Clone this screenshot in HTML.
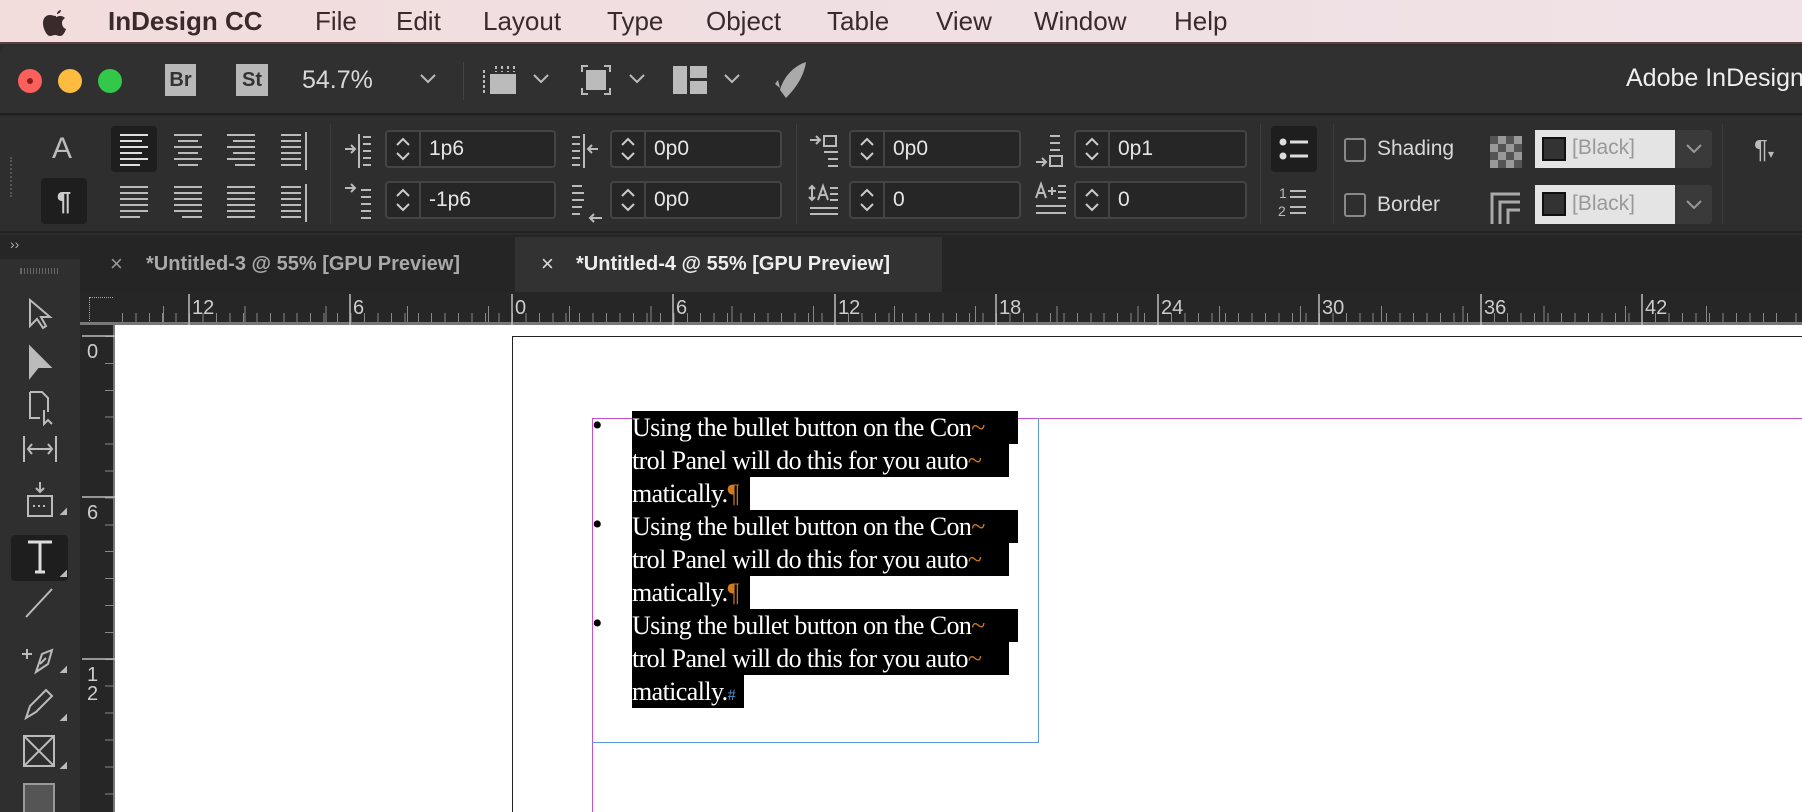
<!DOCTYPE html>
<html><head><meta charset="utf-8"><style>
*{margin:0;padding:0;box-sizing:border-box}
body{width:1802px;height:812px;overflow:hidden;background:#fff;font-family:"Liberation Sans",sans-serif;position:relative}
.a{position:absolute}
.menu{left:0;top:0;width:1802px;height:44px;background:linear-gradient(90deg,#f2dcdc,#efe0e4 60%,#f0e2e6);border-bottom:2px solid #5a3e40}
.menu span{position:absolute;top:6px;font-size:26px;color:#3a2a2c;white-space:nowrap}
.win{left:0;top:44px;width:1802px;height:768px;background:#2c2c2c}
.lt{color:#d8d8d8}
.inp{position:absolute;height:38px;border:2px solid #444;border-radius:4px;background:#262626;color:#e6e6e6;font-size:21px;line-height:34px}
.inp .sp{position:absolute;left:0;top:0;width:34px;height:34px;border-right:2px solid #444}
.inp .v{position:absolute;left:42px;top:0}
.hl{background:#000;color:#fff;display:inline-block;white-space:nowrap;height:33px;line-height:33px}
.txt{font-family:"Liberation Serif",serif;font-size:26px;letter-spacing:-0.6px}
.or{color:#d07a20}
.bul{position:absolute;left:0;top:-2px;font-size:30px;color:#000}
</style></head><body>
<div class="a menu">
<svg class="a" style="left:42px;top:8px" width="28" height="30" viewBox="0 0 28 30"><path d="M19 2c-2 0-4 2-4 4 2 0 4-2 4-4zM14 8c-2 0-4-1-6-1-4 0-7 3-7 8 0 6 4 13 7 13 2 0 3-1 5-1s3 1 5 1c3 0 5-4 6-7-3-1-4-4-4-6 0-3 2-4 3-5-2-2-4-2-5-2-2 0-3 1-4 1z" fill="#3a2a2c"/></svg>
<span style="left:108px;font-weight:bold">InDesign CC</span>
<span style="left:315px">File</span><span style="left:396px">Edit</span><span style="left:483px">Layout</span><span style="left:607px">Type</span><span style="left:706px">Object</span><span style="left:827px">Table</span><span style="left:936px">View</span><span style="left:1034px">Window</span><span style="left:1174px">Help</span>
</div>
<div class="a win"></div>
<div class="a" style="left:0;top:46px;width:1802px;height:69px;background:#303030;border-bottom:2px solid #1e1e1e;border-radius:8px 0 0 0"></div>
<div class="a" style="left:18px;top:69px;width:24px;height:24px;border-radius:50%;background:#fc605c"></div>
<div class="a" style="left:27px;top:78px;width:6px;height:6px;border-radius:50%;background:#8a1d1a"></div>
<div class="a" style="left:58px;top:69px;width:24px;height:24px;border-radius:50%;background:#fdbc40"></div>
<div class="a" style="left:98px;top:69px;width:24px;height:24px;border-radius:50%;background:#34c84a"></div>
<div class="a" style="left:165px;top:64px;width:31px;height:32px;background:#b8b8b8;color:#333;font-size:20px;font-weight:bold;text-align:center;line-height:32px">Br</div>
<div class="a" style="left:236px;top:64px;width:32px;height:32px;background:#b8b8b8;color:#333;font-size:20px;font-weight:bold;text-align:center;line-height:32px">St</div>
<div class="a lt" style="left:302px;top:66px;font-size:25px">54.7%</div>
<svg class="a" style="left:420px;top:74px" width="16" height="10"><path d="M1 1l7 7 7-7" stroke="#bbb" stroke-width="2" fill="none"/></svg>
<div class="a" style="left:463px;top:62px;width:1px;height:38px;background:#444"></div>
<svg class="a" style="left:482px;top:64px" width="38" height="32"><rect x="8" y="10" width="26" height="20" fill="#bbb"/><path d="M2 6v24M14 2v6M20 2v6M26 2v6M32 2v6" stroke="#bbb" stroke-width="2" stroke-dasharray="3 2"/></svg>
<svg class="a" style="left:533px;top:74px" width="16" height="10"><path d="M1 1l7 7 7-7" stroke="#bbb" stroke-width="2" fill="none"/></svg>
<svg class="a" style="left:580px;top:64px" width="32" height="32"><rect x="6" y="6" width="20" height="20" fill="#bbb"/><path d="M2 8V2h6M24 2h6v6M30 24v6h-6M8 30H2v-6" stroke="#bbb" stroke-width="2" fill="none"/></svg>
<svg class="a" style="left:629px;top:74px" width="16" height="10"><path d="M1 1l7 7 7-7" stroke="#bbb" stroke-width="2" fill="none"/></svg>
<svg class="a" style="left:673px;top:66px" width="34" height="28"><rect x="0" y="0" width="14" height="28" fill="#bbb"/><rect x="17" y="0" width="17" height="12" fill="#bbb"/><rect x="17" y="15" width="17" height="13" fill="#bbb"/></svg>
<svg class="a" style="left:724px;top:74px" width="16" height="10"><path d="M1 1l7 7 7-7" stroke="#bbb" stroke-width="2" fill="none"/></svg>
<svg class="a" style="left:774px;top:60px" width="36" height="40"><path d="M32 2C20 6 10 16 6 30l6 8C22 28 30 16 32 2zM4 20l-3 4 5 4z" fill="#aaa"/></svg>
<div class="a" style="left:1626px;top:64px;font-size:25px;color:#eee;white-space:nowrap">Adobe InDesign</div>
<div class="a" style="left:0;top:117px;width:1802px;height:116px;background:#2e2e2e;border-bottom:2px solid #222"></div>
<div class="a" style="left:10px;top:157px;width:3px;height:40px;border-left:2px dotted #555"></div>
<div class="a" style="left:52px;top:132px;font-size:30px;color:#bbb">A</div>
<div class="a" style="left:41px;top:178px;width:46px;height:46px;background:#1e1e1e;border-radius:4px;color:#ccc;font-size:26px;text-align:center;line-height:46px;font-weight:bold">¶</div>
<div class="a" style="left:111px;top:126px;width:46px;height:46px;background:#1e1e1e;border-radius:4px"></div>
<svg class="a" style="left:118px;top:132px" width="200" height="90" fill="none" stroke="#bbb" stroke-width="2">
<path d="M2 3h28M2 9h22M2 15h28M2 21h22M2 27h28M2 33h20" stroke="#ddd"/>
<path d="M56 3h28M60 9h20M56 15h28M60 21h20M56 27h28M60 33h20"/>
<path d="M109 3h28M115 9h22M109 15h28M115 21h22M109 27h28M117 33h20"/>
<path d="M163 3h20M163 9h20M163 15h20M163 21h20M163 27h20M163 33h20M188 0v38"/>
<path d="M2 55h28M2 61h28M2 67h28M2 73h28M2 79h28M2 85h20"/>
<path d="M56 55h28M56 61h28M56 67h28M56 73h28M56 79h28M64 85h20"/>
<path d="M109 55h28M109 61h28M109 67h28M109 73h28M109 79h28M109 85h28"/>
<path d="M163 55h20M163 61h20M163 67h20M163 73h20M163 79h20M163 85h20M188 52v38"/>
</svg>
<div class="a" style="left:330px;top:124px;width:1px;height:100px;background:#3e3e3e"></div>
<svg class="a" style="left:343px;top:134px" width="30" height="90" fill="none" stroke="#bbb" stroke-width="2"><path d="M2 15h10M8 11l4 4-4 4M16 0v34M20 3h8M20 10h8M20 17h8M20 24h8M20 31h8"/><path d="M2 54h10M8 50l4 4-4 4M18 56h10M18 63h10M18 70h10M18 77h10M18 84h10"/></svg>
<div class="inp" style="left:385px;top:130px;width:171px"><div class="sp"><svg width="32" height="34"><path d="M10 13l6-6 6 6M10 21l6 6 6-6" stroke="#ccc" stroke-width="2" fill="none"/></svg></div><span class="v">1p6</span></div>
<div class="inp" style="left:385px;top:181px;width:171px"><div class="sp"><svg width="32" height="34"><path d="M10 13l6-6 6 6M10 21l6 6 6-6" stroke="#ccc" stroke-width="2" fill="none"/></svg></div><span class="v">-1p6</span></div>
<svg class="a" style="left:570px;top:134px" width="34" height="90" fill="none" stroke="#bbb" stroke-width="2"><path d="M2 3h8M2 10h8M2 17h8M2 24h8M2 31h8M14 0v34M28 15h-10M22 11l-4 4 4 4"/><path d="M2 52h10M2 59h12M2 66h12M2 73h10M2 80h8M20 84h12M24 80l-4 4 4 4"/></svg>
<div class="inp" style="left:610px;top:130px;width:172px"><div class="sp"><svg width="32" height="34"><path d="M10 13l6-6 6 6M10 21l6 6 6-6" stroke="#ccc" stroke-width="2" fill="none"/></svg></div><span class="v">0p0</span></div>
<div class="inp" style="left:610px;top:181px;width:172px"><div class="sp"><svg width="32" height="34"><path d="M10 13l6-6 6 6M10 21l6 6 6-6" stroke="#ccc" stroke-width="2" fill="none"/></svg></div><span class="v">0p0</span></div>
<div class="a" style="left:796px;top:124px;width:1px;height:100px;background:#3e3e3e"></div>
<svg class="a" style="left:808px;top:134px" width="36" height="90" fill="none" stroke="#bbb" stroke-width="2"><path d="M2 6h10M8 2l4 4-4 4M16 2h12v10H16zM16 18h14M20 25h10M20 32h10"/><path d="M4 52v14M1 55l3-3 3 3M1 63l3 3 3-3M10 66l5-14 5 14M12 61h6M22 54h8M22 60h8M22 66h8M2 74h28M2 80h28"/></svg>
<div class="inp" style="left:849px;top:130px;width:172px"><div class="sp"><svg width="32" height="34"><path d="M10 13l6-6 6 6M10 21l6 6 6-6" stroke="#ccc" stroke-width="2" fill="none"/></svg></div><span class="v">0p0</span></div>
<div class="inp" style="left:849px;top:181px;width:172px"><div class="sp"><svg width="32" height="34"><path d="M10 13l6-6 6 6M10 21l6 6 6-6" stroke="#ccc" stroke-width="2" fill="none"/></svg></div><span class="v">0</span></div>
<svg class="a" style="left:1034px;top:134px" width="36" height="90" fill="none" stroke="#bbb" stroke-width="2"><path d="M16 2h10M16 9h10M16 16h10M2 28h10M8 24l4 4-4 4M16 22h12v10H16z"/><path d="M2 64l5-14 5 14M4 59h6M14 57h8M18 53v8M24 52h8M24 58h8M24 64h8M2 72h30M2 79h30"/></svg>
<div class="inp" style="left:1074px;top:130px;width:173px"><div class="sp"><svg width="32" height="34"><path d="M10 13l6-6 6 6M10 21l6 6 6-6" stroke="#ccc" stroke-width="2" fill="none"/></svg></div><span class="v">0p1</span></div>
<div class="inp" style="left:1074px;top:181px;width:173px"><div class="sp"><svg width="32" height="34"><path d="M10 13l6-6 6 6M10 21l6 6 6-6" stroke="#ccc" stroke-width="2" fill="none"/></svg></div><span class="v">0</span></div>
<div class="a" style="left:1260px;top:124px;width:1px;height:100px;background:#3e3e3e"></div>
<div class="a" style="left:1271px;top:126px;width:46px;height:46px;background:#1e1e1e;border-radius:4px"></div>
<svg class="a" style="left:1278px;top:136px" width="32" height="90"><circle cx="5" cy="6" r="3.5" fill="#ddd"/><circle cx="5" cy="20" r="3.5" fill="#ddd"/><path d="M12 6h18M12 20h18" stroke="#ddd" stroke-width="3"/><text x="1" y="62" font-size="14" fill="#bbb" font-family="Liberation Sans">1</text><text x="0" y="80" font-size="14" fill="#bbb" font-family="Liberation Sans">2</text><path d="M12 55h16M12 61h16M12 71h16M12 77h16" stroke="#bbb" stroke-width="2"/></svg>
<div class="a" style="left:1333px;top:124px;width:1px;height:100px;background:#3e3e3e"></div>
<div class="a" style="left:1344px;top:138px;width:22px;height:24px;border:2px solid #888;border-radius:3px"></div>
<div class="a lt" style="left:1377px;top:137px;font-size:21px">Shading</div>
<div class="a" style="left:1344px;top:193px;width:22px;height:24px;border:2px solid #888;border-radius:3px"></div>
<div class="a lt" style="left:1377px;top:193px;font-size:21px">Border</div>
<svg class="a" style="left:1490px;top:136px" width="32" height="90"><rect x="0" y="0" width="32" height="32" fill="#999"/><path d="M0 0h8v8H0zM16 0h8v8h-8zM8 8h8v8H8zM24 8h8v8h-8zM0 16h8v8H0zM16 16h8v8h-8zM8 24h8v8H8zM24 24h8v8h-8z" fill="#555"/><path d="M2 88V58h28M10 88V66h20M18 88V74h12" stroke="#aaa" stroke-width="3" fill="none"/></svg>
<div class="a" style="left:1535px;top:130px;width:177px;height:38px;background:#3a3a3a;border-radius:3px"></div>
<div class="a" style="left:1535px;top:130px;width:140px;height:38px;background:#e4e4e4"></div>
<div class="a" style="left:1542px;top:137px;width:24px;height:24px;background:#333;border:2px solid #111"></div>
<div class="a" style="left:1572px;top:136px;font-size:21px;color:#999">[Black]</div>
<svg class="a" style="left:1686px;top:144px" width="16" height="10"><path d="M1 1l7 7 7-7" stroke="#999" stroke-width="2" fill="none"/></svg>
<div class="a" style="left:1535px;top:185px;width:177px;height:39px;background:#3a3a3a;border-radius:3px"></div>
<div class="a" style="left:1535px;top:185px;width:140px;height:39px;background:#e4e4e4"></div>
<div class="a" style="left:1542px;top:192px;width:24px;height:24px;background:#333;border:2px solid #111"></div>
<div class="a" style="left:1572px;top:192px;font-size:21px;color:#999">[Black]</div>
<svg class="a" style="left:1686px;top:200px" width="16" height="10"><path d="M1 1l7 7 7-7" stroke="#999" stroke-width="2" fill="none"/></svg>
<div class="a" style="left:1722px;top:124px;width:1px;height:100px;background:#3e3e3e"></div>
<div class="a" style="left:1754px;top:134px;font-size:26px;color:#bbb">¶<span style="font-size:12px">▾</span></div>
<div class="a" style="left:0;top:235px;width:1802px;height:57px;background:#252525"></div>
<div class="a" style="left:0;top:235px;width:80px;height:577px;background:#2f2f2f"></div>
<div class="a" style="left:0;top:235px;width:80px;height:24px;background:#262626"></div>
<div class="a" style="left:10px;top:236px;font-size:14px;color:#aaa">››</div>
<div class="a" style="left:20px;top:268px;width:38px;height:6px;border-left:1px solid #666;background:repeating-linear-gradient(90deg,#666 0 1px,transparent 1px 3px)"></div>
<div class="a" style="left:515px;top:237px;width:427px;height:55px;background:#323232"></div>
<div class="a" style="left:110px;top:251px;font-size:22px;color:#999">×</div>
<div class="a" style="left:146px;top:253px;font-size:20px;font-weight:bold;color:#aaa">*Untitled-3 @ 55% [GPU Preview]</div>
<div class="a" style="left:541px;top:251px;font-size:22px;color:#ddd">×</div>
<div class="a" style="left:576px;top:253px;font-size:20px;font-weight:bold;color:#eee">*Untitled-4 @ 55% [GPU Preview]</div>
<div class="a" style="left:115px;top:325px;width:1687px;height:487px;background:#fff"></div>
<div class="a" style="left:80px;top:292px;width:1722px;height:33px;background:#262626;border-bottom:3px solid #777"></div>
<div class="a" style="left:115px;top:313px;width:1687px;height:9px;background:repeating-linear-gradient(90deg,transparent 0 12.45px,#888 12.45px 13.45px);background-position:-19px 0"></div>
<div class="a" style="left:115px;top:306px;width:1687px;height:16px;background:repeating-linear-gradient(90deg,transparent 0 80.2px,#888 80.2px 81.2px);background-position:-32px 0"></div>
<div class="a" style="left:89px;top:297px;width:24px;height:24px;border-top:1px dotted #aaa;border-left:1px dotted #aaa"></div>
<div class="a" style="left:80px;top:325px;width:35px;height:487px;background:#262626;border-right:2px solid #777"></div>
<div class="a" style="left:105px;top:336px;width:9px;height:476px;background:repeating-linear-gradient(180deg,#888 0 1px,transparent 1px 26.9px)"></div>
<svg class="a" style="left:80px;top:292px" width="1722" height="33" font-family="Liberation Sans" font-size="20" fill="#ccc">
<g stroke="#bbb" stroke-width="1.5"><path d="M109 2v31M270 2v31M432 2v31M593 2v31M755 2v31M916 2v31M1078 2v31M1239 2v31M1401 2v31M1562 2v31"/></g>
<text x="112" y="22">12</text><text x="273" y="22">6</text><text x="435" y="22">0</text><text x="596" y="22">6</text><text x="758" y="22">12</text><text x="919" y="22">18</text><text x="1081" y="22">24</text><text x="1242" y="22">30</text><text x="1404" y="22">36</text><text x="1565" y="22">42</text>
</svg>
<svg class="a" style="left:80px;top:325px" width="35" height="487" font-family="Liberation Sans" font-size="20" fill="#ccc">
<path d="M2 11h33M2 172h33M2 334h33" stroke="#bbb" stroke-width="1.5"/>
<text x="7" y="33">0</text><text x="7" y="194">6</text><text x="7" y="356">1</text><text x="7" y="375">2</text>
</svg>
<div class="a" style="left:11px;top:535px;width:57px;height:46px;background:#1e1e1e;border-radius:4px"></div>
<svg class="a" style="left:0;top:292px" width="80" height="520" fill="none" stroke="#bbb" stroke-width="2">
<path d="M30 8v26l7-7 6 9 3-2-5-9h9z"/>
<path d="M30 55v30l8-10h12z" fill="#bbb"/>
<path d="M30 100h12l6 6v14M30 100v26h10M44 118v14l4-4 4 4" />
<path d="M24 144v26M56 144v26M28 157h24M32 152l-4 5 4 5M48 152l4 5-4 5"/>
<path d="M28 204h24v20H28zM40 190v10M36 196l4 4 4-4M33 214h2M38 214h2M43 214h2"/>
<path d="M62 222l4-4v4z" fill="#bbb"/>
<path d="M28 250h24M40 250v30M35 280h10" stroke="#ddd" stroke-width="3"/>
<path d="M62 284l4-4v4z" fill="#bbb"/>
<path d="M26 325l26-28"/>
<path d="M22 362h10M27 357v10M36 380l6-18 10-4-4 14zM40 372l6-6"/>
<path d="M62 380l4-4v4z" fill="#bbb"/>
<path d="M26 426l4-12 16-16 6 6-16 16z"/>
<path d="M62 428l4-4v4z" fill="#bbb"/>
<path d="M24 444h30v30H24zM24 444l30 30M54 444l-30 30"/>
<path d="M62 476l4-4v4z" fill="#bbb"/>
<rect x="24" y="492" width="30" height="30" fill="#555" stroke="#999"/>
</svg>
<div class="a" style="left:512px;top:336px;width:1290px;height:476px;border-left:1px solid #222;border-top:1px solid #222"></div>
<div class="a" style="left:592px;top:418px;width:1210px;height:1px;background:#c84fd0"></div>
<div class="a" style="left:592px;top:418px;width:1px;height:394px;background:#c84fd0"></div>
<div class="a" style="left:592px;top:418px;width:447px;height:325px;border:1px solid #5a9ad8;border-top:none;border-left:none"></div>
<div class="a txt" style="left:592px;top:411px;width:450px">
<div style="position:relative;height:99px">
<span class="bul">•</span>
<div class="a" style="left:40px;top:0"><span class="hl" style="width:386px">Using the bullet button on the Con<span class="or">~</span></span></div>
<div class="a" style="left:40px;top:33px"><span class="hl" style="width:377px">trol Panel will do this for you auto<span class="or">~</span></span></div>
<div class="a" style="left:40px;top:66px"><span class="hl" style="width:118px">matically.<span class="or">¶</span></span></div>
</div>
<div style="position:relative;height:99px">
<span class="bul">•</span>
<div class="a" style="left:40px;top:0"><span class="hl" style="width:386px">Using the bullet button on the Con<span class="or">~</span></span></div>
<div class="a" style="left:40px;top:33px"><span class="hl" style="width:377px">trol Panel will do this for you auto<span class="or">~</span></span></div>
<div class="a" style="left:40px;top:66px"><span class="hl" style="width:118px">matically.<span class="or">¶</span></span></div>
</div>
<div style="position:relative;height:99px">
<span class="bul">•</span>
<div class="a" style="left:40px;top:0"><span class="hl" style="width:386px">Using the bullet button on the Con<span class="or">~</span></span></div>
<div class="a" style="left:40px;top:33px"><span class="hl" style="width:377px">trol Panel will do this for you auto<span class="or">~</span></span></div>
<div class="a" style="left:40px;top:66px"><span class="hl" style="width:112px">matically.<span style="color:#5a9ad8;font-size:16px">#</span></span></div>
</div>
</div>
</body></html>
